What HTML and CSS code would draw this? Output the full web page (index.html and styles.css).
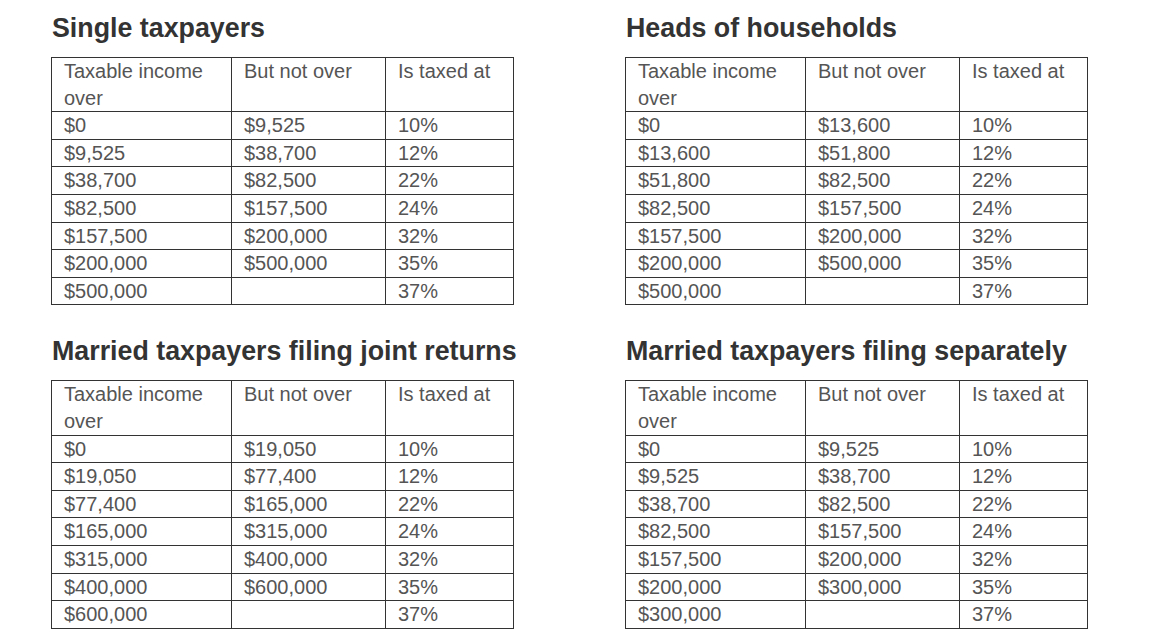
FILE: index.html
```html
<!DOCTYPE html>
<html lang="en">
<head>
<meta charset="utf-8">
<title>Tax brackets</title>
<link rel="stylesheet" href="styles.css">
</head>
<body>
<main class="grid">
  <section class="block">
    <h2 class="title">Single taxpayers</h2>
    <table class="rates">
      <colgroup><col class="c1"><col class="c2"><col class="c3"></colgroup>
      <tr class="head"><td>Taxable income over</td><td>But not over</td><td>Is taxed at</td></tr>
      <tr><td>$0</td><td>$9,525</td><td>10%</td></tr>
      <tr><td>$9,525</td><td>$38,700</td><td>12%</td></tr>
      <tr><td>$38,700</td><td>$82,500</td><td>22%</td></tr>
      <tr><td>$82,500</td><td>$157,500</td><td>24%</td></tr>
      <tr><td>$157,500</td><td>$200,000</td><td>32%</td></tr>
      <tr><td>$200,000</td><td>$500,000</td><td>35%</td></tr>
      <tr><td>$500,000</td><td></td><td>37%</td></tr>
    </table>
  </section>
  <section class="block">
    <h2 class="title">Heads of households</h2>
    <table class="rates">
      <colgroup><col class="c1"><col class="c2"><col class="c3"></colgroup>
      <tr class="head"><td>Taxable income over</td><td>But not over</td><td>Is taxed at</td></tr>
      <tr><td>$0</td><td>$13,600</td><td>10%</td></tr>
      <tr><td>$13,600</td><td>$51,800</td><td>12%</td></tr>
      <tr><td>$51,800</td><td>$82,500</td><td>22%</td></tr>
      <tr><td>$82,500</td><td>$157,500</td><td>24%</td></tr>
      <tr><td>$157,500</td><td>$200,000</td><td>32%</td></tr>
      <tr><td>$200,000</td><td>$500,000</td><td>35%</td></tr>
      <tr><td>$500,000</td><td></td><td>37%</td></tr>
    </table>
  </section>
  <section class="block">
    <h2 class="title">Married taxpayers filing joint returns</h2>
    <table class="rates">
      <colgroup><col class="c1"><col class="c2"><col class="c3"></colgroup>
      <tr class="head"><td>Taxable income over</td><td>But not over</td><td>Is taxed at</td></tr>
      <tr><td>$0</td><td>$19,050</td><td>10%</td></tr>
      <tr><td>$19,050</td><td>$77,400</td><td>12%</td></tr>
      <tr><td>$77,400</td><td>$165,000</td><td>22%</td></tr>
      <tr><td>$165,000</td><td>$315,000</td><td>24%</td></tr>
      <tr><td>$315,000</td><td>$400,000</td><td>32%</td></tr>
      <tr><td>$400,000</td><td>$600,000</td><td>35%</td></tr>
      <tr><td>$600,000</td><td></td><td>37%</td></tr>
    </table>
  </section>
  <section class="block">
    <h2 class="title">Married taxpayers filing separately</h2>
    <table class="rates">
      <colgroup><col class="c1"><col class="c2"><col class="c3"></colgroup>
      <tr class="head"><td>Taxable income over</td><td>But not over</td><td>Is taxed at</td></tr>
      <tr><td>$0</td><td>$9,525</td><td>10%</td></tr>
      <tr><td>$9,525</td><td>$38,700</td><td>12%</td></tr>
      <tr><td>$38,700</td><td>$82,500</td><td>22%</td></tr>
      <tr><td>$82,500</td><td>$157,500</td><td>24%</td></tr>
      <tr><td>$157,500</td><td>$200,000</td><td>32%</td></tr>
      <tr><td>$200,000</td><td>$300,000</td><td>35%</td></tr>
      <tr><td>$300,000</td><td></td><td>37%</td></tr>
    </table>
  </section>
</main>
</body>
</html>
```

FILE: styles.css
```css
html, body {
  margin: 0;
  padding: 0;
  background: #ffffff;
}

body {
  font-family: "Liberation Sans", Arial, sans-serif;
}

.grid {
  display: grid;
  grid-template-columns: 462px 462px;
  column-gap: 112px;
  row-gap: 30px;
  padding: 12px 0 0 51px;
}

.title {
  margin: 0 0 13px 1px;
  font-size: 26.8px;
  line-height: 32px;
  font-weight: bold;
  color: #333333;
  white-space: nowrap;
}

.rates {
  border-collapse: collapse;
  table-layout: fixed;
  width: 462px;
  font-size: 20px;
  line-height: 26.6px;
  color: #555555;
}

.rates .c1 { width: 180px; }
.rates .c2 { width: 154px; }
.rates .c3 { width: 128px; }

.rates td {
  border: 1px solid #333333;
  padding: 0 8px 0 12px;
  vertical-align: top;
  white-space: nowrap;
}

.rates .head td {
  white-space: normal;
  padding-right: 20px;
}
```
